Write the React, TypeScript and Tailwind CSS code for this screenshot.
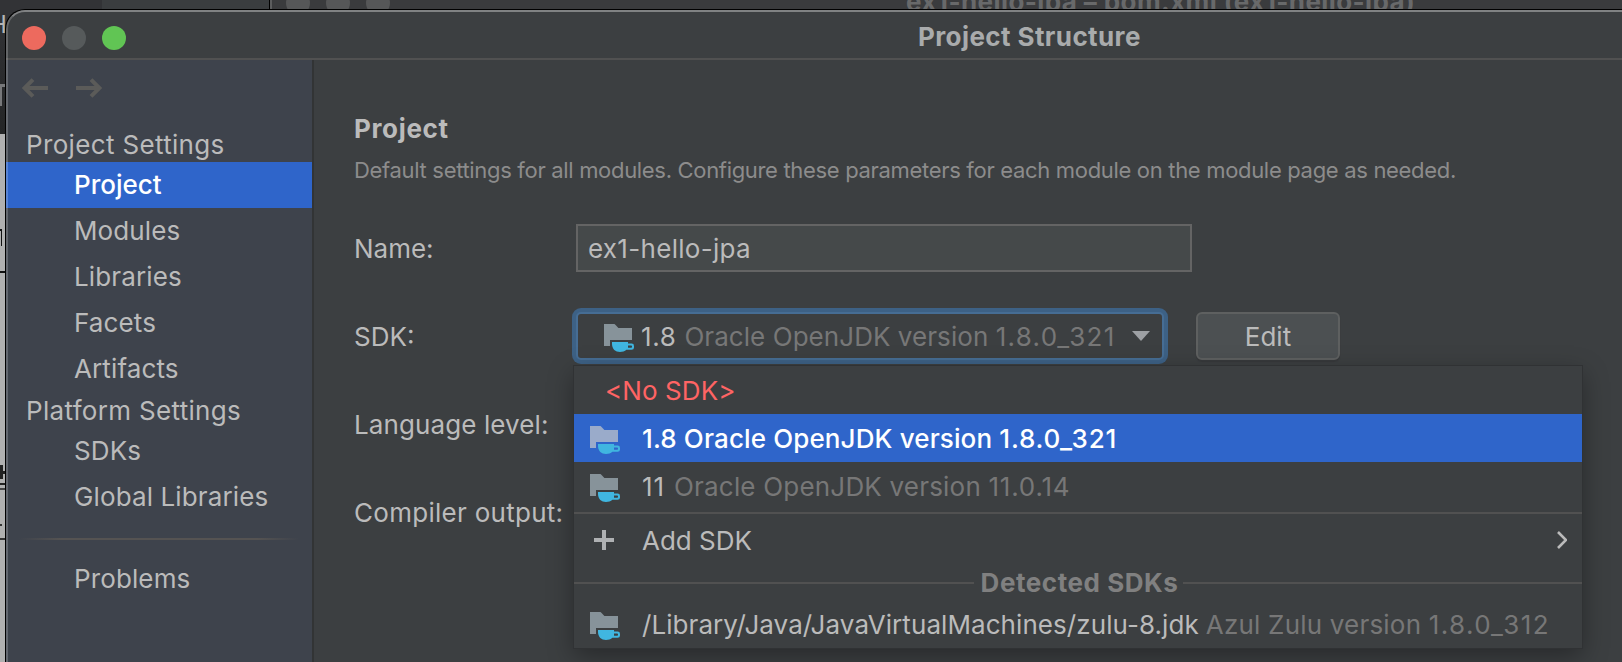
import React from "react";

const SF = "font-['Inter',sans-serif]";

function SdkIcon({ selected = false }: { selected?: boolean }) {
  return (
    <svg className="mt-1 h-7 w-[30px] shrink-0" viewBox="0 0 30 28" fill="none">
      <path
        d="M0 0H9.6C10.6 0 11.2.4 11.8 1.2L14.4 4H28V16H6V22H0Z"
        fill={selected ? "#9aabca" : "#87939a"}
      />
      <path
        fillRule="evenodd"
        d="M8 18H24V19.6H27.6A2.4 2.4 0 0 1 30 22V23.4A2.4 2.4 0 0 1 27.6 25.8H22.4C20.8 27.4 18.4 28 16 28C11.5 28 8 25 8 20ZM24 21.6V23.8H27.2A.8.8 0 0 0 28 23V22.4A.8.8 0 0 0 27.2 21.6Z"
        fill="#40b6e0"
      />
    </svg>
  );
}

function Backdrop() {
  return (
    <div className="absolute inset-0 overflow-hidden bg-[#333335]">
      <div className="absolute left-0 top-0 h-[134px] w-5 bg-gradient-to-b from-[#343538] to-[#242526]" />
      <div className="absolute left-0 top-0 h-7 w-[102px] bg-[#323336]" />
      <div className="absolute left-[102px] top-0 h-7 w-[167px] bg-[#3a3d3f]" />
      <div className="absolute left-[269px] top-0 h-7 w-[1353px] border-l border-black bg-[#3a3b3d]">
        <div className="h-full w-0.5 bg-[#5c5d5e]" />
      </div>
      <span className="absolute left-[286px] top-[-9px] size-6 rounded-full bg-[#565758]" />
      <span className="absolute left-[326px] top-[-9px] size-6 rounded-full bg-[#565758]" />
      <span className="absolute left-[366px] top-[-9px] size-6 rounded-full bg-[#565758]" />
      <span className="absolute left-[906px] top-[-14px] whitespace-nowrap text-[26px] font-bold leading-8 tracking-[0.4px] text-[#68696a]">
        ex1-hello-jpa – pom.xml (ex1-hello-jpa)
      </span>
      <div className="absolute left-0 top-[134px] h-[528px] w-5 bg-[#b0b0b0]" />
      <span className="absolute left-[-11px] top-[9px] text-[24px] leading-8 text-[#b4b5b6]">H</span>
      <span className="absolute left-0 top-[84px] h-[3px] w-5 bg-[#77787a]" />
      <span className="absolute left-0 top-[84px] h-[22px] w-0.5 bg-[#77787a]" />
      <span className="absolute left-[-2px] top-[229px] h-[17px] w-1 border-r border-t-2 border-[#111]" />
      <span className="absolute left-0 top-[271px] h-0.5 w-5 bg-[#111]" />
      <span className="absolute left-0 top-[465px] h-3.5 w-[3px] bg-[#222]" />
      <span className="absolute left-0 top-[471px] h-[3px] w-5 bg-[#222]" />
      <span className="absolute left-0 top-[483px] h-0.5 w-5 bg-[#222]" />
      <span className="absolute left-0 top-[488px] h-0.5 w-5 bg-[#444]" />
      <span className="absolute left-0 top-[524px] h-0.5 w-[2px] bg-[#333]" />
      <span className="absolute left-0 top-[538px] h-0.5 w-5 bg-[#333]" />
    </div>
  );
}

function NavItem({ label, selected = false }: { label: string; selected?: boolean }) {
  return (
    <div
      className={
        selected
          ? "flex h-[46px] items-center bg-[#2f65ca] pb-0.5 pl-[68px] font-medium text-white"
          : "flex h-[46px] items-center pb-0.5 pl-[68px] tracking-[0.12px]"
      }
    >
      {label}
    </div>
  );
}

function Sidebar() {
  return (
    <nav className="flex w-[308px] shrink-0 flex-col border-r-2 border-[#323435] bg-[#3e434c]">
      <div className="flex h-14 items-center gap-7 pl-[16px]">
        <svg className="h-5 w-[26px]" viewBox="0 0 26 20" fill="none" stroke="#5b5b59" strokeWidth="4">
          <path d="M26 10H3M11 1.6L2.6 10L11 18.4" />
        </svg>
        <svg className="h-5 w-[26px]" viewBox="0 0 26 20" fill="none" stroke="#5b5b59" strokeWidth="4">
          <path d="M0 10H23M15 1.6L23.4 10L15 18.4" />
        </svg>
      </div>
      <div className="flex h-[46px] items-end pl-5 tracking-[0.34px]">
        <span className="leading-[35px]">Project Settings</span>
      </div>
      <NavItem label="Project" selected />
      <NavItem label="Modules" />
      <NavItem label="Libraries" />
      <NavItem label="Facets" />
      <NavItem label="Artifacts" />
      <div className="flex h-9 items-center pl-5 tracking-[0.32px]">Platform Settings</div>
      <NavItem label="SDKs" />
      <NavItem label="Global Libraries" />
      <div className="mx-[13px] mb-4 mt-[18px] h-0.5 bg-[linear-gradient(to_right,transparent,#555352_15%,#555352_85%,transparent)]" />
      <NavItem label="Problems" />
    </nav>
  );
}

function SdkPopup() {
  return (
    <div className="absolute left-[-4px] top-[52px] h-[282px] w-[1008px] bg-[#3c3f41] shadow-[0_0_0_1px_#303234,0_8px_24px_rgba(0,0,0,0.35)]">
      <div className="flex h-12 items-center pl-[31px] tracking-[0.1px] text-[#ff6464]">&lt;No SDK&gt;</div>
      <div className="flex h-12 items-center bg-[#2f65ca] pl-4 text-white">
        <SdkIcon selected />
        <span className="ml-[22px] font-medium tracking-[0.13px]">
          1.8 Oracle OpenJDK version <span className="tracking-[0.8px]">1.8.0_321</span>
        </span>
      </div>
      <div className="flex h-12 items-center pl-4">
        <SdkIcon />
        <span className="ml-[22px] tracking-[0.9px]">11</span>
        <span className="ml-[9px] tracking-[0.2px] text-[#777777]">
          Oracle OpenJDK version <span className="tracking-[0.8px]">11.0.14</span>
        </span>
      </div>
      <div className="mt-0.5 h-0.5 bg-[#515151]" />
      <div className="flex h-[54px] items-center pb-px pl-5 pr-[15px]">
        <svg className="mb-px size-5" viewBox="0 0 20 20" stroke="#afb1b3" strokeWidth="4">
          <path d="M10 0V20M0 10H20" />
        </svg>
        <span className="ml-[28px]">Add SDK</span>
        <svg className="mb-0.5 ml-auto h-[18px] w-[10px]" viewBox="0 0 10 18" fill="none" stroke="#bbbbbb" strokeWidth="2.6">
          <path d="M1 1L9 9L1 17" />
        </svg>
      </div>
      <div className="flex h-[30px] items-center">
        <div className="h-0.5 w-[400px] bg-[#515151]" />
        <span className="w-[209px] whitespace-nowrap pb-0.5 pl-0.5 text-center font-bold tracking-[0.55px] text-[#808080]">
          Detected SDKs
        </span>
        <div className="h-0.5 flex-1 bg-[#515151]" />
      </div>
      <div className="flex h-[50px] items-center whitespace-nowrap pl-4 pt-0.5">
        <SdkIcon />
        <span className="ml-[22px] tracking-[0.07px]">/Library/Java/JavaVirtualMachines/zulu-8.jdk</span>
        <span className="ml-[7px] tracking-[0.2px] text-[#777777]">
          Azul Zulu version <span className="tracking-[1.45px]">1.8.0_312</span>
        </span>
      </div>
    </div>
  );
}

function ProjectPage() {
  return (
    <main className="flex min-w-0 flex-1 flex-col bg-[#3c3f41] pl-[40px] pt-[53px]">
      <h1 className="h-8 font-bold leading-8 tracking-[0.65px]">Project</h1>
      <p className="mt-[9px] h-8 whitespace-nowrap text-[22px] leading-8 tracking-[-0.32px] text-[#8c8c8c]">
        Default settings for all modules. Configure these parameters for each module on the module page as needed.
      </p>
      <div className="mt-[38px] flex h-12 items-center">
        <label className="w-[222px]">Name:</label>
        <div className="flex h-12 w-[616px] items-center border-2 border-[#646464] bg-[#45494a] pl-[10px] tracking-[0.3px]">
          ex1-hello-jpa
        </div>
      </div>
      <div className="mt-10 flex h-12 items-center">
        <label className="w-[222px]">SDK:</label>
        <div className="relative flex h-12 w-[588px] items-center rounded-[5px] border-2 border-[#466d94] bg-[#3c3f41] pl-[26px] shadow-[0_0_0_4px_#3d6185]">
          <SdkIcon />
          <span className="ml-[7px] tracking-[0.6px]">1.8</span>
          <span className="ml-2 whitespace-nowrap tracking-[0.06px] text-[#777777]">
            Oracle OpenJDK version <span className="tracking-[1.3px]">1.8.0_321</span>
          </span>
          <svg className="ml-auto mr-3 h-[10px] w-[18px]" viewBox="0 0 18 10" fill="#9da0a4">
            <path d="M0 0H18L9 10Z" />
          </svg>
          <SdkPopup />
        </div>
        <button className="ml-8 h-12 w-36 rounded-[6px] border-2 border-[#5e6060] bg-[#4c5052] shadow-[0_2px_1px_#37393b]">
          Edit
        </button>
      </div>
      <div className="mt-10 flex h-12 items-center tracking-[0.1px]">Language level:</div>
      <div className="mt-10 flex h-12 items-center tracking-[0.28px]">Compiler output:</div>
    </main>
  );
}

export default function App() {
  return (
    <div className={`relative flex h-[662px] w-[1622px] overflow-hidden ${SF} text-[26px] text-[#bbbbbb]`}>
      <Backdrop />
      <div className="relative ml-[5px] mt-[9px] flex h-[653px] w-[1617px] flex-col overflow-hidden rounded-tl-[20px] border-l border-t border-black bg-[#3c3f41]">
        <header className="flex h-[50px] shrink-0 items-center border-b-2 border-[#515151]">
          <div className="flex gap-4 pl-4 pt-2">
            <span className="size-6 rounded-full bg-[#ed6a5e]" />
            <span className="size-6 rounded-full bg-[#565a5b]" />
            <span className="size-6 rounded-full bg-[#61c554]" />
          </div>
          <span className="ml-[792px] pt-[5px] font-bold tracking-[0.4px] text-[#a9abac]">Project Structure</span>
        </header>
        <div className="flex min-h-0 flex-1">
          <Sidebar />
          <ProjectPage />
        </div>
        <div className="pointer-events-none absolute inset-0 rounded-tl-[19px] border-l-2 border-t-2 border-l-white/20 border-t-white/35" />
      </div>
    </div>
  );
}
